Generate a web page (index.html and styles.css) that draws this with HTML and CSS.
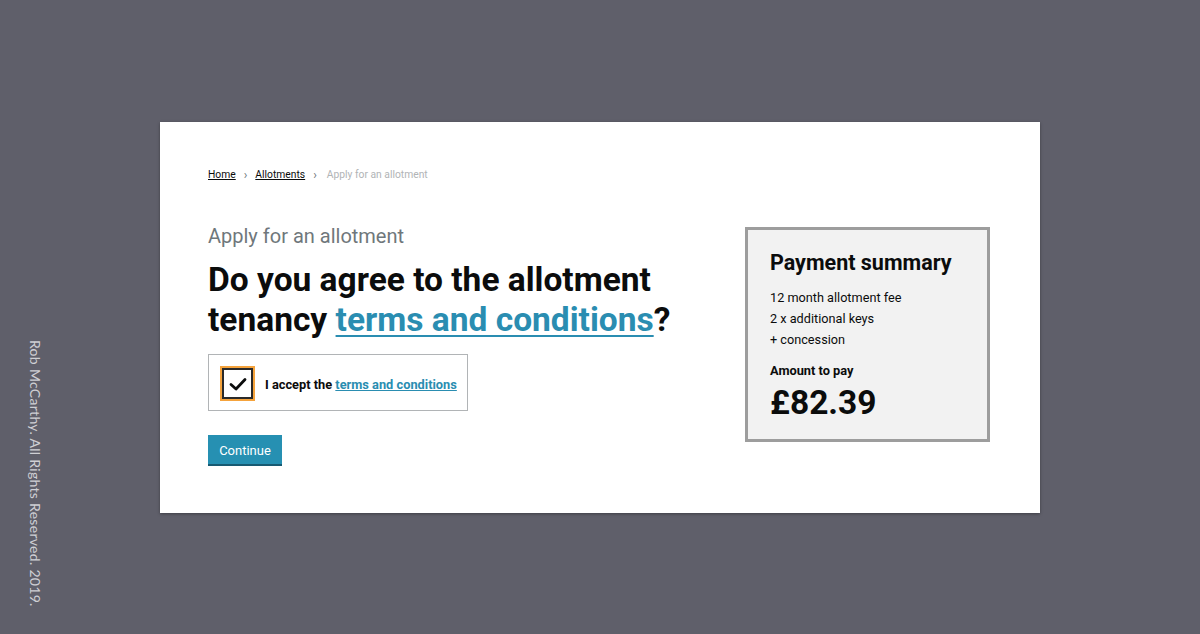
FILE: index.html
```html
<!DOCTYPE html>
<html lang="en">
<head>
<meta charset="utf-8">
<title>Apply for an allotment</title>
<link rel="stylesheet" href="styles.css">
</head>
<body>
<p class="credit">Rob McCarthy. All Rights Reserved. 2019.</p>
<main class="card">
  <nav class="breadcrumbs">
    <a href="#" class="crumb-link">Home</a>
    <span class="crumb-sep">›</span>
    <a href="#" class="crumb-link">Allotments</a>
    <span class="crumb-sep">›</span>
    <span class="crumb-current">Apply for an allotment</span>
  </nav>
  <div class="content">
    <section class="question">
      <p class="caption">Apply for an allotment</p>
      <h1 class="heading">Do you agree to the allotment tenancy <a href="#" class="heading-link">terms and conditions</a>?</h1>
      <label class="checkbox-row">
        <span class="checkbox">
          <svg width="20" height="16" viewBox="0 0 20 16"><path d="M3 8.5 L8 13 L17 3.5" fill="none" stroke="#0b0c0c" stroke-width="2.8" stroke-linecap="round" stroke-linejoin="round"/></svg>
        </span>
        <span class="checkbox-label">I accept the <a href="#" class="label-link">terms and conditions</a></span>
      </label>
      <button class="button">Continue</button>
    </section>
    <aside class="summary">
      <h2 class="summary-title">Payment summary</h2>
      <ul class="summary-list">
        <li>12 month allotment fee</li>
        <li>2 x additional keys</li>
        <li>+ concession</li>
      </ul>
      <p class="amount-label">Amount to pay</p>
      <p class="amount">£82.39</p>
    </aside>
  </div>
</main>
</body>
</html>
```
FILE: styles.css
```css
* { box-sizing: border-box; }
html, body { margin: 0; padding: 0; }
body {
  width: 1200px;
  height: 634px;
  background: #5f5f6a;
  font-family: Roboto, "Liberation Sans", Arial, sans-serif;
  color: #0b0c0c;
  display: flex;
  align-items: center;
  justify-content: center;
  position: relative;
  overflow: hidden;
}
.credit {
  position: absolute;
  left: 27px;
  top: 340px;
  margin: 0;
  writing-mode: vertical-rl;
  font-family: Lato, "Open Sans", sans-serif;
  font-size: 14px;
  letter-spacing: 0.3px;
  color: #cfcfd4;
}
.card {
  width: 880px;
  height: 391px;
  background: #ffffff;
  box-shadow: 0 1px 3px rgba(0,0,0,0.35);
  padding: 46px 50px 0 48px;
}
.breadcrumbs {
  display: flex;
  align-items: center;
  font-size: 10.3px;
  line-height: 14px;
}
.crumb-link { color: #0b0c0c; text-decoration: underline; }
.crumb-sep { color: #6f777b; margin: 0 8px; font-size: 12px; }
.crumb-sep + .crumb-current { margin-left: 2px; }
.crumb-current { color: #b1b4b6; }
.content {
  display: flex;
  justify-content: space-between;
  margin-top: 41px;
}
.question { width: 490px; }
.caption {
  margin: 0;
  font-size: 20px;
  line-height: 26px;
  color: #6f777b;
}
.heading {
  margin: 11px 0 14px;
  font-size: 33.5px;
  line-height: 40px;
  font-weight: 700;
}
.heading-link {
  color: #2a8db1;
  text-decoration: underline;
  text-decoration-thickness: 2px;
  text-underline-offset: 4px;
}
.checkbox-row {
  display: flex;
  align-items: center;
  width: 260px;
  height: 57px;
  border: 1px solid #b1b4b6;
  padding: 0 0 0 11px;
}
.checkbox {
  width: 35px;
  height: 35px;
  border: 2px solid #f5a33c;
  display: flex;
  align-items: center;
  justify-content: center;
  position: relative;
  top: 1px;
}
.checkbox::before {
  content: "";
  position: absolute;
  inset: 0;
  border: 2px solid #2a2a2a;
}
.checkbox svg { position: relative; top: 1px; }
.checkbox-label {
  margin-left: 10px;
  font-size: 12.8px;
  font-weight: 700;
  position: relative;
  top: 2px;
}
.label-link { color: #2a8db1; text-decoration: underline; }
.button {
  margin-top: 24px;
  font-family: inherit;
  font-size: 13px;
  color: #ffffff;
  background: #2690b2;
  border: 0;
  box-shadow: 0 2px 0 #175a72;
  height: 29px;
  width: 74px;
  padding: 3px 0 0;
  line-height: 26px;
}
.summary {
  width: 245px;
  height: 215px;
  margin-top: 4px;
  border: 3px solid #9d9d9d;
  background: #f2f2f2;
  padding: 21px 22px 0 22px;
}
.summary-title {
  margin: 0 0 12px;
  font-size: 21.5px;
  line-height: 24px;
  font-weight: 700;
}
.summary-list {
  list-style: none;
  margin: 0;
  padding: 0;
  font-size: 12.7px;
  line-height: 21px;
}
.amount-label {
  margin: 13px 0 0;
  font-size: 12.8px;
  line-height: 16px;
  font-weight: 700;
}
.amount {
  margin: 4px 0 0;
  font-size: 33.5px;
  line-height: 40px;
  font-weight: 700;
}
```
